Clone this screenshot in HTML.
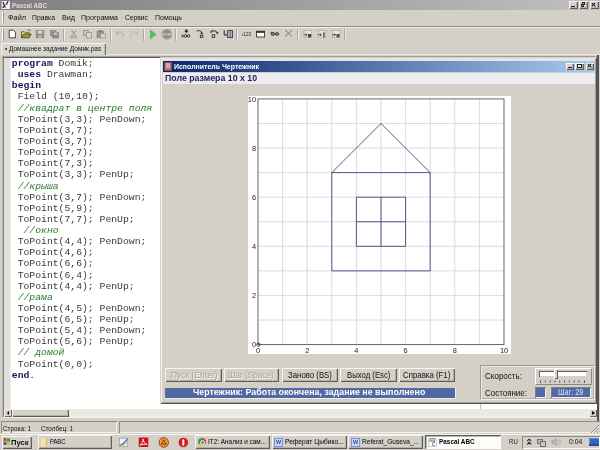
<!DOCTYPE html>
<html lang="ru">
<head>
<meta charset="utf-8">
<title>Pascal ABC</title>
<style>
html,body{margin:0;padding:0}
body{width:600px;height:450px;position:relative;overflow:hidden;background:#d4d0c8;font-family:"Liberation Sans",sans-serif;font-size:8px;color:#000;line-height:1}
.a{position:absolute}
.t{position:absolute;white-space:nowrap;transform-origin:0 50%}
/* outer title */
#title{left:0;top:0;width:600px;height:10px;background:linear-gradient(90deg,#7e7e7e 0%,#c0c0c0 100%)}
.wb{position:absolute;width:9px;height:8px;background:#d4d0c8;box-shadow:inset 1px 1px 0 #f6f5f2,inset -1px -1px 0 #5e5c58,inset -2px -2px 0 #b4b1aa;box-sizing:border-box}
.wb i{position:absolute;display:block}
/* menu */
.m{top:11px;line-height:14px;color:#111}
/* code */
.ln{position:absolute;left:11.8px;white-space:pre;font-family:"Liberation Mono",monospace;font-size:9.75px;line-height:11.13px;height:11.13px;color:#3a3a3a}
.ln b{color:#16165c;font-weight:bold}
.ln i{color:#2a7a2a;font-style:italic}
/* buttons */
.btn{position:absolute;height:13.8px;box-sizing:border-box;background:#d4d0c8;box-shadow:inset 1px 1px 0 #f6f5f2,inset -1px -1px 0 #5e5c58,inset -2px -2px 0 #b4b1aa;text-align:center;font-size:8.2px;line-height:12px;white-space:nowrap;color:#111}
.dis{text-shadow:0.6px 0.6px 0 #fff}
.tb{position:absolute;top:435px;height:14px;box-sizing:border-box;background:#d4d0c8;box-shadow:inset 1px 1px 0 #f6f5f2,inset -1px -1px 0 #5e5c58,inset -2px -2px 0 #b4b1aa;font-size:7.4px;line-height:14px;white-space:nowrap;overflow:hidden;color:#111}
.sep{position:absolute;top:29px;width:1px;height:12px;background:#a9a7a1;box-shadow:1px 0 0 #eeede9}
</style>
</head>
<body>
<div id="scr" class="a" style="left:0;top:0;width:600px;height:450px;overflow:hidden;filter:blur(0.3px)">

<!-- ===== outer window title ===== -->
<div id="title" class="a">
  <svg class="a" style="left:0;top:0" width="11" height="10" viewBox="0 0 11 10"><rect x="0" y="0" width="1.6" height="10" fill="#8a7d90"/><rect x="1.6" y="1" width="8.4" height="8" fill="#f4eef4"/><path d="M3.2 2.4L5 7.200M4.6 5.600L3 7.400M6.2 4.4L7.8 1.800" fill="none" stroke="#2c2a38" stroke-width="1.3" stroke-linecap="round"/></svg>
  <div class="wb" style="left:569px;top:1px"><i style="left:2px;top:5px;width:4px;height:1px;background:#222"></i></div>
  <div class="wb" style="left:579px;top:1px"><i style="left:3px;top:1px;width:3px;height:3px;border:1px solid #222;border-top-width:1px;box-sizing:border-box"></i><i style="left:2px;top:3px;width:3px;height:3px;border:1px solid #222;background:#d4d0c8;box-sizing:border-box"></i></div>
  <div class="wb" style="left:589.5px;top:1px;width:9.5px"><i style="left:1.8px;top:3px;width:5px;height:1.3px;background:#1a1a1a;transform:rotate(45deg)"></i><i style="left:1.8px;top:3px;width:5px;height:1.3px;background:#1a1a1a;transform:rotate(-45deg)"></i></div>
</div>

<div class="t" style="left:12px;top:0.5px;line-height:10px;font-size:8px;font-weight:bold;color:#dedbd4;transform:scaleX(0.785)">Pascal ABC</div>

<!-- ===== menu ===== -->
<div class="a" style="left:2px;top:12px;width:1px;height:11px;background:#fff;box-shadow:1px 0 0 #9a968e"></div>
<div id="menu">
  <div class="t m" style="left:8px;font-size:8.1px;transform:scaleX(0.904)">Файл</div>
  <div class="t m" style="left:32px;font-size:8.1px;transform:scaleX(0.841)">Правка</div>
  <div class="t m" style="left:62px;font-size:8.1px;transform:scaleX(0.887)">Вид</div>
  <div class="t m" style="left:81px;font-size:8.1px;transform:scaleX(0.872)">Программа</div>
  <div class="t m" style="left:125px;font-size:8.1px;transform:scaleX(0.829)">Сервис</div>
  <div class="t m" style="left:155px;font-size:8.1px;transform:scaleX(0.863)">Помощь</div>
</div>
<div class="a" style="left:0;top:25.6px;width:600px;height:1px;background:#8f8c86"></div>
<div class="a" style="left:0;top:26.6px;width:600px;height:1px;background:#f2f1ee"></div>

<!-- ===== toolbar ===== -->
<div class="a" style="left:2px;top:29px;width:1px;height:12px;background:#fff;box-shadow:1px 0 0 #9a968e"></div>
<svg class="a" style="left:0;top:27px" width="360" height="16" viewBox="0 27 360 16">
  <!-- new -->
  <path d="M9.2 30.2h4.2l2 2v5.6h-6.2z" fill="#fff" stroke="#333" stroke-width="0.9"/>
  <!-- open -->
  <path d="M21.5 37.8v-6h3l1 1h3.5v1.2" fill="#f0ec90" stroke="#4a4618" stroke-width="0.8"/>
  <path d="M21.5 37.8l2-3.8h7.6l-2 3.8z" fill="#a09c2c" stroke="#3c380a" stroke-width="0.8"/>
  <path d="M27.5 30.6c1-1 2.4-1 3.2 0.2" fill="none" stroke="#333" stroke-width="0.7"/>
  <!-- save -->
  <rect x="36.2" y="30.6" width="7.6" height="7.2" fill="#8e8c88" stroke="#7a7874" stroke-width="0.6"/>
  <rect x="37.8" y="30.8" width="4.4" height="3" fill="#d8d5ce"/>
  <rect x="38.2" y="35.4" width="3.4" height="2.4" fill="#b8b5ae"/>
  <!-- save all -->
  <rect x="50.4" y="30.4" width="5.6" height="5.4" fill="#9a9894" stroke="#86847f" stroke-width="0.6"/>
  <rect x="52.6" y="32.4" width="5.8" height="5.6" fill="#8e8c88" stroke="#7a7874" stroke-width="0.6"/>
  <rect x="53.8" y="32.6" width="3.2" height="2.2" fill="#d0cdc6"/>
  <!-- cut -->
  <path d="M71.6 30.2l3.6 5.4M76 30.2l-3.6 5.4" stroke="#8e8c88" stroke-width="0.9" fill="none"/>
  <circle cx="72" cy="36.8" r="1.2" fill="none" stroke="#8e8c88" stroke-width="0.8"/>
  <circle cx="75.6" cy="36.8" r="1.2" fill="none" stroke="#8e8c88" stroke-width="0.8"/>
  <!-- copy -->
  <rect x="83.6" y="30.4" width="4.6" height="5.2" fill="#c9c6bf" stroke="#8e8c88" stroke-width="0.8"/>
  <rect x="86.6" y="32.6" width="4.8" height="5.4" fill="#dcd9d2" stroke="#8e8c88" stroke-width="0.8"/>
  <!-- paste -->
  <rect x="97" y="31" width="6.6" height="6.8" fill="#97948f" stroke="#85827d" stroke-width="0.6"/>
  <rect x="98.8" y="30.2" width="3" height="1.6" fill="#7c7a76"/>
  <rect x="100.4" y="33.6" width="5" height="4.4" fill="#d6d3cc" stroke="#8e8c88" stroke-width="0.6"/>
  <!-- undo / redo -->
  <path d="M117 33.2c2.6-2.4 6-1.4 6.4 1.8c0 1.2-.6 2-1.6 2.6" fill="none" stroke="#a9a6a0" stroke-width="1"/>
  <path d="M116.2 31.2v3h3z" fill="#a9a6a0"/>
  <path d="M137 33.2c-2.6-2.4-6-1.4-6.4 1.8c0 1.2.6 2 1.6 2.6" fill="none" stroke="#bab7b0" stroke-width="1"/>
  <path d="M137.8 31.2v3h-3z" fill="#bab7b0"/>
  <!-- run -->
  <path d="M150.4 30v9l5.8-4.5z" fill="#4cc860" stroke="#3cae50" stroke-width="0.5"/>
  <!-- stop -->
  <circle cx="166.8" cy="34.2" r="5" fill="#8f8d89" stroke="#a9a7a2" stroke-width="0.8"/>
  <text x="166.8" y="35.6" text-anchor="middle" font-family="Liberation Sans, sans-serif" font-size="3.6" font-weight="bold" fill="#dddad4">STOP</text>
  <!-- step over -->
  <path d="M186.4 29.4v3.4M184.7 31.1h3.4" stroke="#15153c" stroke-width="1.3"/>
  <circle cx="182.6" cy="35.9" r="0.9" fill="none" stroke="#222" stroke-width="0.8"/>
  <circle cx="185.4" cy="35.9" r="1.3" fill="none" stroke="#222" stroke-width="0.85"/>
  <circle cx="188.5" cy="35.9" r="1.3" fill="none" stroke="#222" stroke-width="0.85"/>
  <!-- step into -->
  <path d="M196.8 31.2c2.2-1.2 4.8-.6 5 2.2" fill="none" stroke="#222" stroke-width="1"/>
  <path d="M200.2 32.8h3.2l-1.6 1.8z" fill="#222"/>
  <rect x="200.3" y="35.2" width="2.5" height="2.3" fill="none" stroke="#222" stroke-width="0.8"/>
  <!-- step out -->
  <path d="M211 33.2v-2.2h3.6c1.6 0 2.4.8 2.6 2" fill="none" stroke="#222" stroke-width="1"/>
  <path d="M215.6 32.4h3.2l-1.6 1.9z" fill="#222"/>
  <rect x="212.2" y="34.8" width="2.6" height="2.6" fill="none" stroke="#222" stroke-width="0.8"/>
  <!-- run to cursor -->
  <path d="M224.2 30.4v4.6h3" fill="none" stroke="#1a1a5a" stroke-width="1"/>
  <rect x="227.6" y="30.6" width="5" height="7" fill="#b8b6b0" stroke="#333" stroke-width="0.8"/>
  <path d="M230.2 31v6.4" stroke="#333" stroke-width="0.6"/>
  <!-- watch text -->
  <text x="241.8" y="35.9" font-family="Liberation Sans, sans-serif" font-size="5.2" fill="#1a1a1a" textLength="9.2" lengthAdjust="spacingAndGlyphs">›123</text>
  <!-- window -->
  <rect x="256.6" y="31.2" width="8" height="5.8" fill="#fff" stroke="#222" stroke-width="0.8"/>
  <rect x="256.6" y="31.2" width="8" height="1.6" fill="#222"/>
  <!-- glasses -->
  <rect x="271.2" y="32.7" width="3.2" height="2.5" rx="1" fill="#999" stroke="#222" stroke-width="0.9"/><path d="M270.6 32.4h2.4" stroke="#222" stroke-width="0.7"/>
  <rect x="275.4" y="32.7" width="3.2" height="2.5" rx="1" fill="#999" stroke="#222" stroke-width="0.9"/>
  <!-- X -->
  <path d="M285.2 30l6.8 6.6M292 30l-6.8 6.6" stroke="#9a9892" stroke-width="1.3"/>
  <!-- three icons -->
  <g id="ic3">
    <rect x="304" y="30.4" width="7.6" height="7.2" fill="#e6e4de" stroke="#a5a39d" stroke-width="0.6"/>
    <path d="M303.6 34.8h3.4M305.6 33.4l1.6 1.4l-1.6 1.4" stroke="#333" stroke-width="0.8" fill="none"/>
    <rect x="308" y="34" width="3.2" height="3.4" fill="#444"/>
  </g>
  <g transform="translate(14.2 0)">
    <rect x="304" y="30.4" width="7.6" height="7.2" fill="#e6e4de" stroke="#a5a39d" stroke-width="0.6"/>
    <path d="M303.6 34.8h3.4M305.6 33.4l1.6 1.4l-1.6 1.4" stroke="#333" stroke-width="0.8" fill="none"/>
    <rect x="309" y="32.4" width="1.4" height="5" fill="#444"/>
  </g>
  <g transform="translate(28.4 0)">
    <rect x="304" y="30.4" width="7.6" height="7.2" fill="#e6e4de" stroke="#a5a39d" stroke-width="0.6"/>
    <path d="M303.6 34.8h3.4M305.6 33.4l1.6 1.4l-1.6 1.4" stroke="#333" stroke-width="0.8" fill="none"/>
    <rect x="308" y="34" width="3.2" height="3.4" fill="#555"/>
  </g>
</svg>
<div class="sep" style="left:63px"></div>
<div class="sep" style="left:110px"></div>
<div class="sep" style="left:143px"></div>
<div class="sep" style="left:175px"></div>
<div class="sep" style="left:236px"></div>
<div class="sep" style="left:297px"></div>
<div class="sep" style="left:344px"></div>
<div class="a" style="left:105.6px;top:54.1px;width:494.4px;height:1px;background:#ebe9e4"></div>

<!-- ===== tab ===== -->
<div class="a" style="left:1px;top:42.6px;width:104.6px;height:12.4px;background:#d9d6cf;box-shadow:inset 1px 1px 0 #f4f3f0,inset -1.3px 0 0 #76746f;border-radius:1px 1px 0 0"></div>
<div class="t" style="left:5.2px;top:43.4px;line-height:12px;font-size:6.6px;color:#111;transform:scaleX(0.98)">•</div>
<div class="t" style="left:8.9px;top:43.1px;line-height:12px;font-size:7.3px;color:#111;transform:scaleX(0.893)">Домашнее задание Домик.pas</div>

<!-- ===== editor ===== -->
<div class="a" style="left:2px;top:56.1px;width:596px;height:361.9px;background:#fff;box-sizing:border-box;border:1px solid;border-color:#a09e98 #f4f3f0 #f4f3f0 #b4b2ac;box-shadow:inset 0 1px 0 #5e5c58,inset 1px 0 0 #84827e"></div>
<div class="a" style="left:3.8px;top:58px;width:6.2px;height:351px;background:#e1dfda"></div>
<div class="a" style="left:10px;top:58px;width:0.8px;height:351px;background:#efeeeb"></div>
<div class="a" style="left:480px;top:404px;width:1px;height:5px;background:#c0c0c0"></div>
<div class="ln" style="top:58.10px"><b>program</b> Domik;</div>
<div class="ln" style="top:69.23px"> <b>uses</b> Drawman;</div>
<div class="ln" style="top:80.36px"><b>begin</b></div>
<div class="ln" style="top:91.49px"> Field (10,10);</div>
<div class="ln" style="top:102.62px"><i> //квадрат в центре поля</i></div>
<div class="ln" style="top:113.75px"> ToPoint(3,3); PenDown;</div>
<div class="ln" style="top:124.88px"> ToPoint(3,7);</div>
<div class="ln" style="top:136.01px"> ToPoint(3,7);</div>
<div class="ln" style="top:147.14px"> ToPoint(7,7);</div>
<div class="ln" style="top:158.27px"> ToPoint(7,3);</div>
<div class="ln" style="top:169.40px"> ToPoint(3,3); PenUp;</div>
<div class="ln" style="top:180.53px"><i> //крыша</i></div>
<div class="ln" style="top:191.66px"> ToPoint(3,7); PenDown;</div>
<div class="ln" style="top:202.79px"> ToPoint(5,9);</div>
<div class="ln" style="top:213.92px"> ToPoint(7,7); PenUp;</div>
<div class="ln" style="top:225.05px"><i>  //окно</i></div>
<div class="ln" style="top:236.18px"> ToPoint(4,4); PenDown;</div>
<div class="ln" style="top:247.31px"> ToPoint(4,6);</div>
<div class="ln" style="top:258.44px"> ToPoint(6,6);</div>
<div class="ln" style="top:269.57px"> ToPoint(6,4);</div>
<div class="ln" style="top:280.70px"> ToPoint(4,4); PenUp;</div>
<div class="ln" style="top:291.83px"><i> //рама</i></div>
<div class="ln" style="top:302.96px"> ToPoint(4,5); PenDown;</div>
<div class="ln" style="top:314.09px"> ToPoint(6,5); PenUp;</div>
<div class="ln" style="top:325.22px"> ToPoint(5,4); PenDown;</div>
<div class="ln" style="top:336.35px"> ToPoint(5,6); PenUp;</div>
<div class="ln" style="top:347.48px"><i> // домой</i></div>
<div class="ln" style="top:358.61px"> ToPoint(0,0);</div>
<div class="ln" style="top:369.74px"><b>end</b>.</div>

<div class="a" style="left:597.3px;top:54.5px;width:1.3px;height:366px;background:#55534f"></div>
<!-- h scrollbar -->
<div class="a" style="left:4px;top:408.8px;width:593px;height:8.6px;background:#ebe9e4"></div>
<div class="a" style="left:4px;top:409px;width:8.2px;height:8.4px;background:#d4d0c8;box-shadow:inset 1px 1px 0 #f6f5f2,inset -1px -1px 0 #6a6864"></div>
<div class="a" style="left:6.6px;top:411.2px;width:0;height:0;border:2px solid transparent;border-right:2.6px solid #000;border-left:0"></div>
<div class="a" style="left:12.2px;top:409px;width:56.4px;height:8.4px;background:#d4d0c8;box-shadow:inset 1px 1px 0 #f6f5f2,inset -1px -1px 0 #5e5c58,inset -2px -2px 0 #b4b1aa"></div>
<div class="a" style="left:588.5px;top:409px;width:8.5px;height:8.4px;background:#d4d0c8;box-shadow:inset 1px 1px 0 #f6f5f2,inset -1px -1px 0 #6a6864"></div>
<div class="a" style="left:592px;top:411px;width:0;height:0;border:2px solid transparent;border-left:3px solid #000;border-right:0"></div>

<!-- ===== floating window: Исполнитель Чертежник ===== -->
<div class="a" style="left:160.3px;top:57.3px;width:437.2px;height:346.8px;background:#d4d0c8;box-sizing:border-box;box-shadow:inset 1px 1px 0 #d4d0c8,inset -1px -1px 0 #55534f,inset 2px 2px 0 #f6f5f2,inset -2px -2px 0 #a3a19b"></div>
<div class="a" style="left:162px;top:58.4px;width:433px;height:2.4px;background:#e6e5e6"></div>
<div class="a" style="left:163px;top:60.5px;width:431.8px;height:11px;background:linear-gradient(90deg,#0a246a 0%,#a6caf0 100%)"></div>
<div class="a" style="left:164px;top:61.5px;width:8px;height:9px;background:#b47878;box-shadow:inset 0 0 0 1px #7a4a4a"></div>
<div class="a" style="left:166px;top:63px;width:4px;height:5px;background:#d0a8a0"></div>
<div class="t" style="left:174.2px;top:60.5px;line-height:11px;font-size:8px;font-weight:bold;color:#fff;transform:scaleX(0.870)">Исполнитель Чертежник</div>
<div class="wb" style="left:565.5px;top:62.5px;height:7.5px;width:8.5px"><i style="left:2px;top:4.5px;width:4px;height:1px;background:#222"></i></div>
<div class="wb" style="left:575px;top:62.5px;height:7.5px;width:8.5px"><i style="left:1.5px;top:1px;width:5px;height:4.5px;border:1px solid #222;border-top-width:1.5px;box-sizing:border-box;background:#f4f4f4"></i></div>
<div class="wb" style="left:585.5px;top:62.5px;height:7.5px;width:8.5px"><i style="left:1.5px;top:2.7px;width:5px;height:1.3px;background:#1a1a1a;transform:rotate(45deg)"></i><i style="left:1.5px;top:2.7px;width:5px;height:1.3px;background:#1a1a1a;transform:rotate(-45deg)"></i></div>

<div class="a" style="left:163px;top:72.5px;width:431.8px;height:11.2px;background:#ececee"></div>
<div class="t" style="left:164.5px;top:72px;line-height:12px;font-size:9px;font-weight:bold;color:#1c2462;transform:scaleX(0.975)">Поле размера 10 x 10</div>

<!-- field -->
<div class="a" style="left:247.5px;top:95.8px;width:263px;height:258.4px;background:#fff"></div>
<svg class="a" style="left:0;top:0" width="600" height="450" viewBox="0 0 600 450">
  <g stroke="#d4d4dc" stroke-width="0.85" fill="none">
<line x1="282.60" y1="98.9" x2="282.60" y2="344.6"/>
<line x1="258.0" y1="320.03" x2="504.0" y2="320.03"/>
<line x1="307.20" y1="98.9" x2="307.20" y2="344.6"/>
<line x1="258.0" y1="295.46" x2="504.0" y2="295.46"/>
<line x1="331.80" y1="98.9" x2="331.80" y2="344.6"/>
<line x1="258.0" y1="270.89" x2="504.0" y2="270.89"/>
<line x1="356.40" y1="98.9" x2="356.40" y2="344.6"/>
<line x1="258.0" y1="246.32" x2="504.0" y2="246.32"/>
<line x1="381.00" y1="98.9" x2="381.00" y2="344.6"/>
<line x1="258.0" y1="221.75" x2="504.0" y2="221.75"/>
<line x1="405.60" y1="98.9" x2="405.60" y2="344.6"/>
<line x1="258.0" y1="197.18" x2="504.0" y2="197.18"/>
<line x1="430.20" y1="98.9" x2="430.20" y2="344.6"/>
<line x1="258.0" y1="172.61" x2="504.0" y2="172.61"/>
<line x1="454.80" y1="98.9" x2="454.80" y2="344.6"/>
<line x1="258.0" y1="148.04" x2="504.0" y2="148.04"/>
<line x1="479.40" y1="98.9" x2="479.40" y2="344.6"/>
<line x1="258.0" y1="123.47" x2="504.0" y2="123.47"/>
  </g>
  <rect x="258.0" y="98.9" width="246" height="245.7" fill="none" stroke="#555" stroke-width="0.9"/>
  <g stroke="#34346c" stroke-width="0.8" fill="none">
<polyline points="331.80,270.89 331.80,172.61 430.20,172.61 430.20,270.89 331.80,270.89"/>
<polyline points="331.80,172.61 381.00,123.47 430.20,172.61"/>
<polyline points="356.40,246.32 356.40,197.18 405.60,197.18 405.60,246.32 356.40,246.32"/>
<polyline points="356.40,221.75 405.60,221.75"/>
<polyline points="381.00,246.32 381.00,197.18"/>
  </g>
  <g font-family="Liberation Sans, sans-serif" font-size="7.4" fill="#222">
<text x="258.0" y="352.6" text-anchor="middle">0</text>
<text x="307.2" y="352.6" text-anchor="middle">2</text>
<text x="256" y="298.1" text-anchor="end">2</text>
<text x="356.4" y="352.6" text-anchor="middle">4</text>
<text x="256" y="248.9" text-anchor="end">4</text>
<text x="405.6" y="352.6" text-anchor="middle">6</text>
<text x="256" y="199.8" text-anchor="end">6</text>
<text x="454.8" y="352.6" text-anchor="middle">8</text>
<text x="256" y="150.6" text-anchor="end">8</text>
<text x="504.0" y="352.6" text-anchor="middle">10</text>
<text x="256" y="101.5" text-anchor="end">10</text>
<text x="256" y="347.0" text-anchor="end">0</text>
  </g>
  <circle cx="258.4" cy="344.7" r="1.6" fill="none" stroke="#222" stroke-width="0.9"/>
</svg>

<!-- buttons -->
<div class="btn dis" style="left:165px;top:368.3px;width:56.5px"></div>
<div class="t dis" style="left:171px;top:370px;line-height:12px;font-size:8.2px;color:#a29e96;transform:scaleX(1.039)">Пуск (Enter)</div>
<div class="btn dis" style="left:223.5px;top:368.3px;width:55px"></div>
<div class="t dis" style="left:228.3px;top:370px;line-height:12px;font-size:8.2px;color:#a29e96;transform:scaleX(0.992)">Шаг (Space)</div>
<div class="btn" style="left:281.5px;top:368.3px;width:56.5px"></div>
<div class="t" style="left:288.3px;top:370px;line-height:12px;font-size:8.2px;color:#111;transform:scaleX(0.954)">Заново (BS)</div>
<div class="btn" style="left:340.2px;top:368.3px;width:56.8px"></div>
<div class="t" style="left:347.3px;top:370px;line-height:12px;font-size:8.2px;color:#111;transform:scaleX(0.945)">Выход (Esc)</div>
<div class="btn" style="left:399px;top:368.3px;width:55.5px"></div>
<div class="t" style="left:403.3px;top:370px;line-height:12px;font-size:8.2px;color:#111;transform:scaleX(0.958)">Справка (F1)</div>
<div class="a" style="left:165px;top:387.5px;width:289.5px;height:10.5px;background:#5068a4;box-shadow:inset 1px 1px 0 #5a6a94,0 1px 0 #efeeea,1px 0 0 #efeeea;text-align:center;font-size:8.2px;line-height:10.5px;white-space:nowrap"></div>
<div class="t" style="left:193.3px;top:387.5px;line-height:10.5px;font-size:8.2px;font-weight:bold;color:#fff;transform:scaleX(1.082)">Чертежник: Работа окончена, задание не выполнено</div>

<!-- speed/state panel -->
<div class="a" style="left:480px;top:365.3px;width:114.5px;height:35px;box-sizing:border-box;border:1px solid;border-color:#9c9a94 #efeeea #efeeea #9c9a94;box-shadow:inset 1px 1px 0 #e9e7e2,inset -1px -1px 0 #b4b2ac"></div>
<div class="t" style="left:485px;top:370px;line-height:12px;font-size:8.6px;color:#111;transform:scaleX(0.936)">Скорость:</div>
<div class="t" style="left:485px;top:387px;line-height:12px;font-size:8.6px;color:#111;transform:scaleX(0.927)">Состояние:</div>
<div class="a" style="left:534.5px;top:368px;width:57px;height:16.5px;box-sizing:border-box;border:1px solid;border-color:#fff #8c8a84 #8c8a84 #fff"></div>
<div class="a" style="left:539px;top:370.5px;width:48px;height:6.5px;background:#fff;box-shadow:inset 1px 1px 0 #606060,inset -1px -1px 0 #d4d0c8"></div>
<div class="a" style="left:554px;top:369px;width:3.5px;height:10px;background:#d4d0c8;box-shadow:inset 1px 1px 0 #fff,inset -1px -1px 0 #606060"></div>
<svg class="a" style="left:538px;top:380px" width="52" height="4" viewBox="0 0 52 4"><path d="M2.5 .5v2.5M7.3 .5v2M12.1 .5v2M16.9 .5v2M21.7 .5v2M26.5 .5v2M31.3 .5v2M36.1 .5v2M40.9 .5v2M46.5 .5v2.5" stroke="#444" stroke-width="0.9"/></svg>
<div class="a" style="left:535px;top:387px;width:11px;height:11px;background:#5068a4;box-shadow:inset 1px 1px 0 #808080,inset -1px -1px 0 #f4f3f0"></div>
<div class="a" style="left:550.5px;top:387px;width:40px;height:11px;background:#5068a4;box-shadow:inset 1px 1px 0 #808080,inset -1px -1px 0 #f4f3f0;"></div>
<div class="t" style="left:557.8px;top:387px;line-height:11px;font-size:8.4px;color:#e4e8f4;transform:scaleX(0.859)">Шаг: 29</div>

<!-- ===== status bar ===== -->
<div class="a" style="left:1px;top:421.3px;width:116px;height:11.4px;box-shadow:inset 1px 1px 0 #8c8a84,inset -1px -1px 0 #f2f1ee"></div>
<div class="a" style="left:118.5px;top:421.3px;width:484px;height:11.4px;box-shadow:inset 1px 1px 0 #8c8a84,inset -1px -1px 0 #f2f1ee"></div>
<div class="t" style="left:3px;top:423px;line-height:11px;font-size:8px;color:#111;transform:scaleX(0.792)">Строка: 1</div>
<div class="t" style="left:41px;top:423px;line-height:11px;font-size:8px;color:#111;transform:scaleX(0.786)">Столбец: 1</div>
<svg class="a" style="left:590px;top:424px" width="10" height="10" viewBox="0 0 10 10"><path d="M9 1L1 9M9 4L4 9M9 7L7 9" stroke="#8c8a84" stroke-width="0.9"/><path d="M9.8 1.8L1.8 9.8M9.8 4.8L4.8 9.8" stroke="#fff" stroke-width="0.6"/></svg>

<!-- ===== taskbar ===== -->
<div class="a" style="left:0;top:433.5px;width:600px;height:1px;background:#f6f5f2"></div>
<div class="tb" style="left:2px;width:29.5px;height:13.5px;top:435.5px"></div>
<svg class="a" style="left:3px;top:437px" width="8" height="10" viewBox="0 0 8 10"><rect x="0.5" y="1" width="3" height="3.2" fill="#e0402a"/><rect x="4" y="1.4" width="3" height="3.2" fill="#3ca03c"/><rect x="0.5" y="4.8" width="3" height="3.2" fill="#3060c8"/><rect x="4" y="5.2" width="3" height="3.2" fill="#e8c020"/></svg>
<div class="t" style="left:10.5px;top:435.5px;line-height:13.5px;font-size:8px;font-weight:bold;color:#111;transform:scaleX(0.948)">Пуск</div>

<div class="tb" style="left:37.5px;width:74.5px"></div>
<div class="a" style="left:41px;top:438px;width:6.4px;height:9px;background:#f2e6a4;box-shadow:inset -1.5px 0 0 #dcc468"></div>
<div class="t" style="left:50px;top:435px;line-height:14px;font-size:8px;transform:scaleX(0.731)">PABC</div>

<svg class="a" style="left:116px;top:435px" width="76" height="15" viewBox="116 435 76 15">
  <rect x="119.3" y="438.2" width="8.4" height="8.4" fill="#f6f4ea" stroke="#8a93a8" stroke-width="0.7"/>
  <path d="M119.6 445.6c2.6-.6 5.4-3.2 7.8-6.6" fill="none" stroke="#4a78c8" stroke-width="1.4"/>
  <path d="M120.4 446.2c2.8-.4 5-2 7-4.4" fill="none" stroke="#e6c860" stroke-width="1.1"/>
  <rect x="138.7" y="437.6" width="9.6" height="9.4" rx="0.8" fill="#c8161a"/>
  <path d="M140.2 445.2c1.8-1.6 3-4 3-6.2c0 2.6 1.6 4.6 4 5.4c-2.6-.4-5 0-7 .8z" fill="none" stroke="#fff" stroke-width="0.9"/>
  <circle cx="163.7" cy="442.5" r="4.7" fill="#f0a22c" stroke="#8a3a14" stroke-width="1"/>
  <path d="M163.7 439.9l2.5 4.3h-5z" fill="none" stroke="#7a2a10" stroke-width="1"/>
  <circle cx="183.3" cy="442.5" r="4.8" fill="#d81c18"/>
  <rect x="182.3" y="439.3" width="2" height="6.4" rx="0.9" fill="#fff"/>
</svg>

<div class="tb" style="left:195px;width:74.5px"></div>
<div class="a" style="left:198px;top:438px;width:8px;height:8px;border-radius:50%;background:conic-gradient(#e04030 0 33%,#f0c020 33% 66%,#40a040 66% 100%)"></div>
<div class="a" style="left:200.5px;top:440.5px;width:3px;height:3px;border-radius:50%;background:#4a80d8;box-shadow:0 0 0 .7px #fff"></div>
<div class="t" style="left:208px;top:435px;line-height:14px;font-size:8px;transform:scaleX(0.800)">IT2: Анализ и сам...</div>

<div class="tb" style="left:271.5px;width:75.5px"></div>
<div class="a" style="left:274px;top:438px;width:9px;height:8.5px;background:#c8d6f4;box-shadow:inset 0 0 0 1px #7a96d4"></div>
<div class="t" style="left:275.5px;top:438px;line-height:8.5px;font-size:5.5px;font-weight:bold;color:#2848a8;transform:scaleX(0.98)">W</div>
<div class="t" style="left:285px;top:435px;line-height:14px;font-size:8px;transform:scaleX(0.833)">Реферат Цыбико...</div>

<div class="tb" style="left:348px;width:75px"></div>
<div class="a" style="left:351px;top:438px;width:9px;height:8.5px;background:#c8d6f4;box-shadow:inset 0 0 0 1px #7a96d4"></div>
<div class="t" style="left:352.5px;top:438px;line-height:8.5px;font-size:5.5px;font-weight:bold;color:#2848a8;transform:scaleX(0.98)">W</div>
<div class="t" style="left:361.7px;top:435px;line-height:14px;font-size:8px;transform:scaleX(0.822)">Referat_Guseva_...</div>

<div class="tb" style="left:425px;width:76px;background:#fcfcfb;box-shadow:inset 1px 1px 0 #5c5a56,inset -1px -1px 0 #fff,inset 2px 2px 0 #bab8b2"></div>
<div class="a" style="left:428px;top:438px;width:9px;height:9px;background:#fafafa;box-shadow:inset 0 0 0 1px #d4cce0"></div>
<div class="t" style="left:429px;top:438.5px;line-height:4px;font-size:4.5px;font-weight:bold;color:#4a8a3a;transform:scaleX(0.98)">AB</div>
<div class="t" style="left:431.5px;top:442.5px;line-height:4px;font-size:4.5px;font-weight:bold;color:#a03a8a;transform:scaleX(0.98)">C</div>
<div class="t" style="left:439.2px;top:435px;line-height:14px;font-size:8px;font-weight:bold;color:#000;transform:scaleX(0.800)">Pascal ABC</div>

<div class="t" style="left:509.2px;top:435px;line-height:14px;font-size:8px;color:#222;transform:scaleX(0.762)">RU</div>
<div class="a" style="left:521.5px;top:435.5px;width:78.5px;height:13.5px;box-shadow:inset 1px 1px 0 #8c8a84,inset -1px -1px 0 #fff"></div>
<svg class="a" style="left:526px;top:437px" width="7" height="10" viewBox="0 0 7 10"><path d="M1.2 4.2L3.200 2.2L5.200 4.200M1.200 7.4L3.200 5.4L5.200 7.4" fill="none" stroke="#222" stroke-width="1.1"/></svg>
<div class="a" style="left:536.5px;top:438.5px;width:6px;height:5px;background:#b9bdc6;box-shadow:inset 0 0 0 1px #74726e"></div>
<div class="a" style="left:539.5px;top:441px;width:6px;height:5.5px;background:#c3c7d0;box-shadow:inset 0 0 0 1px #74726e"></div>
<svg class="a" style="left:551px;top:437px" width="10" height="10" viewBox="0 0 10 10"><path d="M1 3.8h1.8l2.2-2v6.4l-2.2-2H1z" fill="#c8c6c0" stroke="#777" stroke-width="0.6"/><path d="M6.5 2.5c1.2 1.4 1.2 3.6 0 5M8 1.5c1.8 2 1.8 5 0 7" fill="none" stroke="#aaa" stroke-width="0.7"/></svg>
<div class="t" style="left:568.8px;top:435px;line-height:14px;font-size:8px;color:#111;transform:scaleX(0.848)">0:04</div>
<div class="a" style="left:589px;top:438px;width:9.5px;height:8px;background:#2f66c0;box-shadow:inset 0 -2px 0 #244c94,inset 1px 1px 0 #5a8ee0"></div>

</div>
</body>
</html>
